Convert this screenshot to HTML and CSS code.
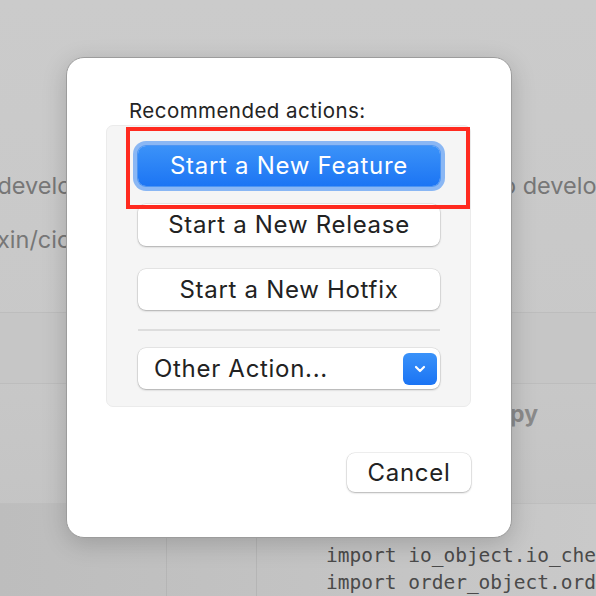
FILE: index.html
```html
<!DOCTYPE html>
<html>
<head>
<meta charset="utf-8">
<link rel="stylesheet" href="styles.css">
</head>
<body>
<div class="backdrop">
  <div class="bg-top"></div>
  <div class="bg-row bg-row-1">
    <span class="bg-text bg-left">/develo</span>
    <span class="bg-text bg-right">o develo</span>
  </div>
  <div class="bg-row bg-row-2">
    <span class="bg-text bg-left2">xin/cic</span>
  </div>
  <div class="bg-band"></div>
  <div class="bg-head">
    <span class="bg-bold">py</span>
  </div>
  <div class="bg-code">
    <div class="col col-a"></div>
    <div class="col col-b"></div>
    <div class="code">
      <div>import io_object.io_check</div>
      <div>import order_object.order</div>
    </div>
  </div>
</div>

<div class="dialog">
  <div class="label">Recommended actions:</div>
  <div class="group">
    <button class="btn btn-primary">Start a New Feature</button>
    <button class="btn btn-release">Start a New Release</button>
    <button class="btn btn-hotfix">Start a New Hotfix</button>
    <div class="sep"></div>
    <div class="btn select">
      <span>Other Action...</span>
      <span class="chev"><svg width="14" height="10" viewBox="0 0 14 10"><path d="M3 3 L7 7 L11 3" fill="none" stroke="#fff" stroke-width="2.2" stroke-linecap="round" stroke-linejoin="round"/></svg></span>
    </div>
  </div>
  <div class="footer">
    <button class="btn btn-cancel">Cancel</button>
  </div>
</div>
<div class="highlight"></div>
</body>
</html>
```

FILE: styles.css
```css
html, body {
  margin: 0;
  padding: 0;
}
body {
  width: 596px;
  height: 596px;
  overflow: hidden;
  position: relative;
  background: #c9c9c9;
  font-family: Inter, "Noto Sans", sans-serif;
}
.backdrop {
  width: 596px;
  height: 596px;
  overflow: hidden;
  display: flex;
  flex-direction: column;
  background: linear-gradient(180deg, #cbcbcb 0%, #c8c8c8 60%, #c2c2c2 100%);
}
.bg-top { height: 166px; flex-shrink: 0; }
.bg-row {
  display: flex;
  justify-content: flex-start;
  height: 38px;
  align-items: center;
  flex-shrink: 0;
}
.bg-text {
  font-size: 23.5px;
  color: #777777;
  white-space: nowrap;
  flex-shrink: 0;
}
.bg-left {
  margin-left: -11px;
  width: 513px;
}
.bg-right { }
.bg-row-2 { margin-top: 16px; }
.bg-left2 { margin-left: -3px; }
.bg-band {
  margin-top: 54px;
  height: 70px;
  flex-shrink: 0;
  border-top: 1px solid #bdbdbd;
  border-bottom: 1px solid #bdbdbd;
  background: #c6c6c6;
}
.bg-head {
  height: 119px;
  flex-shrink: 0;
  display: flex;
  justify-content: flex-end;
  border-bottom: 1px solid #bebebe;
}
.bg-bold {
  font-weight: 700;
  font-size: 23px;
  color: #8a8a8a;
  margin-top: 16px;
  margin-right: 58px;
}
.bg-code {
  flex: 1;
  display: flex;
  background: linear-gradient(90deg, #bdbdbd 0%, #c4c4c4 60%, #c9c9c9 100%);
}
.col { height: 100%; border-right: 1px solid #b5b5b5; flex-shrink: 0; }
.col-a { width: 166px; }
.col-b { width: 89px; }
.code {
  margin-left: 69px;
  padding-top: 38px;
  font-family: "DejaVu Sans Mono", monospace;
  font-size: 19.5px;
  line-height: 27px;
  color: #4a4a4a;
  white-space: nowrap;
}

.dialog {
  position: absolute;
  left: 66px;
  top: 57px;
  width: 446px;
  height: 481px;
  box-sizing: border-box;
  background: #ffffff;
  border: 1px solid #9c9c9c;
  border-radius: 18px;
  box-shadow: 0 6px 24px rgba(0,0,0,0.18);
  padding: 40px 40px 0 39px;
  display: flex;
  flex-direction: column;
}
.label {
  font-size: 20.5px;
  line-height: 26px;
  letter-spacing: 0.45px;
  color: #242424;
  margin-left: 23px;
  margin-bottom: 1px;
}
.group {
  background: #f5f5f5;
  border: 1px solid #ebebeb;
  border-radius: 7px;
  height: 282px;
  flex-shrink: 0;
  box-sizing: border-box;
  padding: 20px 30px 0 31px;
  display: flex;
  flex-direction: column;
}
.btn {
  box-sizing: border-box;
  height: 41px;
  flex-shrink: 0;
  border: none;
  border-radius: 8px;
  background: #ffffff;
  box-shadow: 0 0 0 0.5px rgba(0,0,0,0.12), 0 1px 2px rgba(0,0,0,0.25);
  font-family: Inter, "Noto Sans", sans-serif;
  font-size: 24px;
  letter-spacing: 0.7px;
  color: #222222;
  padding: 0 0 1px 0;
  display: flex;
  align-items: center;
  justify-content: center;
}
.btn-primary {
  height: 40px;
  padding-bottom: 2px;
  background: linear-gradient(180deg, #3b92f8 0%, #1c75f4 100%);
  color: #ffffff;
  box-shadow: 0 0 0 1px #4d95f3, 0 0 0 5px #8ab7f4;
}
.btn-release { margin-top: 18px; height: 42px; }
.btn-hotfix { margin-top: 23px; }
.sep {
  height: 2px;
  flex-shrink: 0;
  background: #dddddd;
  margin-top: 19px;
}
.select {
  margin-top: 17px;
  justify-content: space-between;
  padding-left: 16px;
  padding-right: 3px;
}
.chev {
  width: 34px;
  height: 32px;
  border-radius: 6px;
  background: linear-gradient(180deg, #3a92f9 0%, #1b74f4 100%);
  display: flex;
  align-items: center;
  justify-content: center;
  margin-top: 1px;
}
.footer {
  display: flex;
  justify-content: flex-end;
  margin-top: 46px;
}
.btn-cancel {
  width: 124px;
  height: 39px;
}
.highlight {
  position: absolute;
  left: 126px;
  top: 127px;
  width: 344px;
  height: 82px;
  box-sizing: border-box;
  border: 4px solid #ff2a1f;
}
```
